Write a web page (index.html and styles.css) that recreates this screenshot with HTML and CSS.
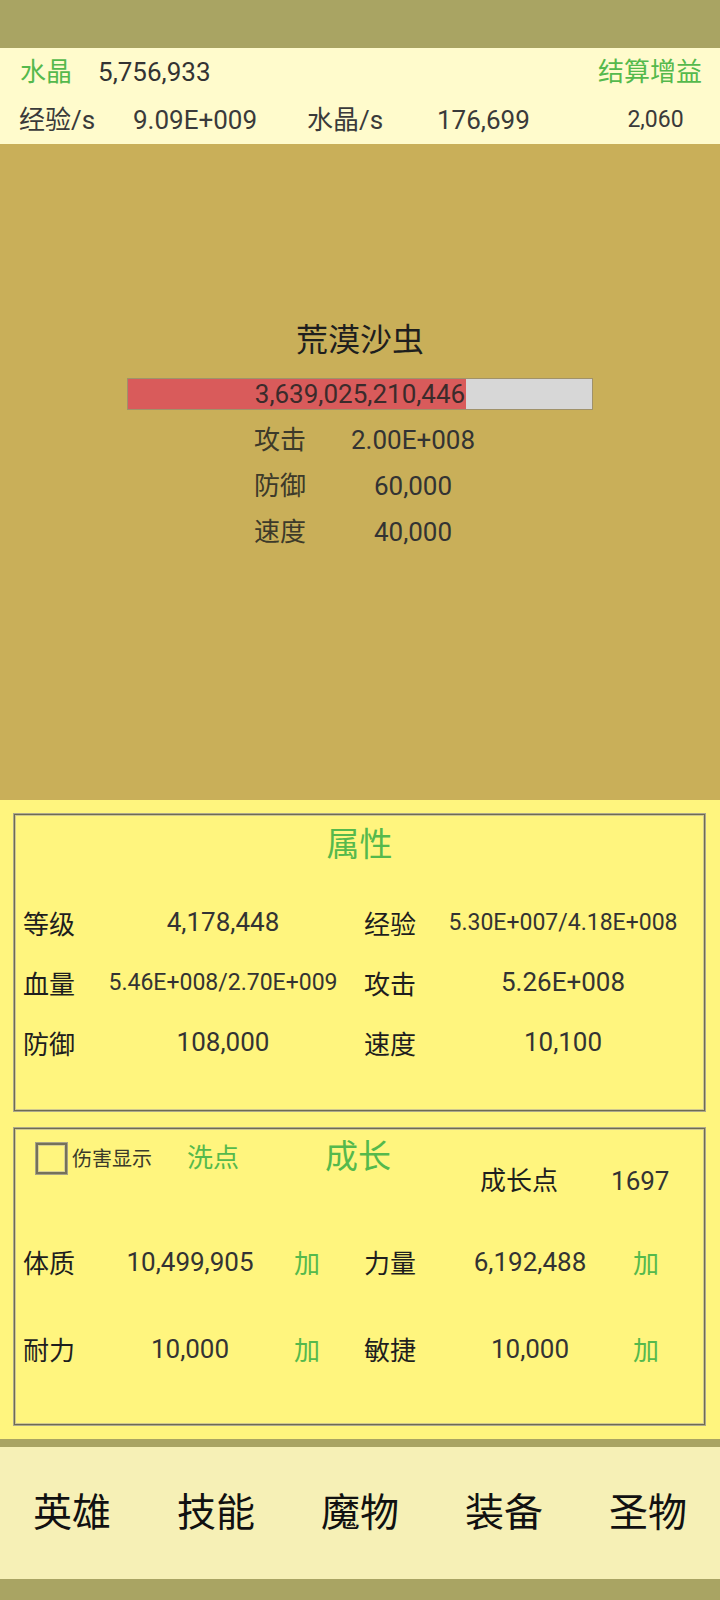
FILE: index.html
```html
<!DOCTYPE html>
<html lang="zh-CN">
<head>
	<meta charset="UTF-8"/>
	<title>挂机</title>
	<meta name="viewport" content="width=device-width, initial-scale=1.0"/>
	<link rel="stylesheet" href="styles.css">
</head>
<body>
	<div class="statusbar"></div>

	<div class="resources">
		<div class="res-row">
			<span class="green res-name">水晶</span>
			<span class="res-total">5,756,933</span>
			<span class="green res-bonus">结算增益</span>
		</div>
		<div class="res-row rates">
			<span>经验/s</span>
			<span>9.09E+009</span>
			<span>水晶/s</span>
			<span>176,699</span>
			<span class="small">2,060</span>
		</div>
	</div>

	<div class="battle">
		<div class="monster-name">荒漠沙虫</div>
		<div class="hpbar">
			<div class="hpfill" style="width: 72.8%"></div>
			<span>3,639,025,210,446</span>
		</div>
		<div class="monster-stats">
			<span>攻击</span><span class="val">2.00E+008</span>
			<span>防御</span><span class="val">60,000</span>
			<span>速度</span><span class="val">40,000</span>
		</div>
	</div>

	<div class="panels">
		<div class="panel">
			<div class="panel-title green">属性</div>
			<div class="attr-grid">
				<span class="lbl">等级</span><span class="val">4,178,448</span>
				<span class="lbl lbl2">经验</span><span class="val long">5.30E+007/4.18E+008</span>

				<span class="lbl">血量</span><span class="val long">5.46E+008/2.70E+009</span>
				<span class="lbl lbl2">攻击</span><span class="val">5.26E+008</span>

				<span class="lbl">防御</span><span class="val">108,000</span>
				<span class="lbl lbl2">速度</span><span class="val">10,100</span>
			</div>
		</div>

		<div class="panel">
			<div class="grow-head">
				<label class="dmg">
					<span class="box"></span>
					<span>伤害显示</span>
				</label>
				<span class="green reset">洗点</span>
				<span class="green grow-title">成长</span>
				<span class="points-lbl">成长点</span>
				<span class="points">1697</span>
			</div>
			<div class="grow-grid">
				<span class="lbl">体质</span><span class="val">10,499,905</span><span class="green add">加</span>
				<span class="lbl lbl2">力量</span><span class="val">6,192,488</span><span class="green add">加</span>

				<span class="lbl">耐力</span><span class="val">10,000</span><span class="green add">加</span>
				<span class="lbl lbl2">敏捷</span><span class="val">10,000</span><span class="green add">加</span>
			</div>
		</div>
	</div>

	<nav class="tabs">
		<a href="#">英雄</a>
		<a href="#">技能</a>
		<a href="#">魔物</a>
		<a href="#">装备</a>
		<a href="#">圣物</a>
	</nav>
</body>
</html>
```

FILE: styles.css
```css
* {
	margin: 0;
	padding: 0;
	box-sizing: border-box;
}

body {
	width: 720px;
	height: 1600px;
	background-color: #a9a463;
	color: #333;
	font-family: Roboto, "Noto Sans CJK SC", sans-serif;
	font-size: 26px;
}

.green {
	color: #55b94c;
}

.statusbar {
	height: 48px;
}

/* resources */
.resources {
	height: 96px;
	background-color: #fffbcc;
}
.res-row {
	display: flex;
	align-items: center;
	height: 48px;
	padding: 0 18px 0 20px;
	line-height: 48px;
}
.res-total {
	margin-left: 26px;
}
.res-bonus {
	margin-left: auto;
}
.rates {
	display: grid;
	grid-template-columns: 114px 174px 130px 172px auto;
	padding-left: 19px;
	color: #3a3a3a;
}
.rates .small {
	font-size: 23px;
	justify-self: center;
}

/* monster */
.battle {
	height: 656px;
	padding-top: 176px;
	background-color: #c9af59;
}
.monster-name {
	text-align: center;
	font-size: 32px;
	line-height: 40px;
	color: #1e1e1e;
}
.hpbar {
	position: relative;
	width: 466px;
	height: 32px;
	margin: 18px auto 0;
	background-color: #d7d7d7;
	border: 1px solid #a0926a;
	text-align: center;
	line-height: 30px;
	color: #3b2b2b;
}
.hpfill {
	position: absolute;
	top: 0;
	left: 0;
	bottom: 0;
	background-color: #d95b5b;
}
.hpbar span {
	position: relative;
}
.monster-stats {
	display: grid;
	grid-template-columns: 76px 166px;
	margin-top: 7px;
	padding-left: 254px;
	line-height: 46px;
	color: #3d3a2a;
}
.monster-stats .val {
	text-align: center;
}

/* panels */
.panels {
	display: flex;
	flex-direction: column;
	gap: 15px;
	height: 639px;
	padding: 13px 14px 13px 13px;
	background-color: #fff57e;
}
.panel {
	height: 299px;
	border: 1px solid #aca88c;
	box-shadow: inset 0 0 0 1px #6f6b52, inset 0 0 0 2px #cec78f;
	padding: 2px 9px;
}
.panel-title {
	padding-top: 9px;
	text-align: center;
	font-size: 33px;
	line-height: 40px;
}
.lbl {
	color: #1e1e1e;
}
.val {
	text-align: center;
	color: #333;
}
.long {
	font-size: 23px;
}
.attr-grid {
	display: grid;
	grid-template-columns: 66px 268px 73px 1fr;
	grid-auto-rows: 60px;
	align-items: center;
	margin-top: 27px;
}
.lbl2 {
	padding-left: 7px;
}

/* growth */
.grow-head {
	display: flex;
	align-items: flex-start;
	height: 88px;
	padding-top: 12px;
	line-height: 32px;
}
.dmg {
	display: flex;
	align-items: center;
	gap: 4px;
	margin-left: 12px;
	font-size: 20px;
	color: #3a3a2a;
}
.box {
	width: 33px;
	height: 33px;
	border: 1px solid #a6a286;
	box-shadow: inset 0 0 0 2px #75715a, inset 0 0 0 3px #d6cf95;
}
.reset {
	margin-left: 35px;
}
.grow-title {
	margin-left: 86px;
	font-size: 33px;
	line-height: 30px;
}
.points-lbl {
	margin-left: 89px;
	margin-top: 23px;
	color: #1e1e1e;
}
.points {
	margin-left: 53px;
	margin-top: 23px;
}
.grow-grid {
	display: grid;
	grid-template-columns: 66px 202px 32px 107px 200px 32px;
	grid-auto-rows: 87px;
	align-items: center;
}
.grow-grid .lbl2 {
	padding-left: 41px;
}
.add {
	text-align: center;
}

/* bottom tabs */
.tabs {
	display: grid;
	grid-template-columns: repeat(5, 1fr);
	align-items: center;
	height: 132px;
	margin-top: 8px;
	padding-bottom: 8px;
	background-color: #f6f0b6;
}
.tabs a {
	text-align: center;
	color: #111;
	text-decoration: none;
	font-size: 39px;
}
```
